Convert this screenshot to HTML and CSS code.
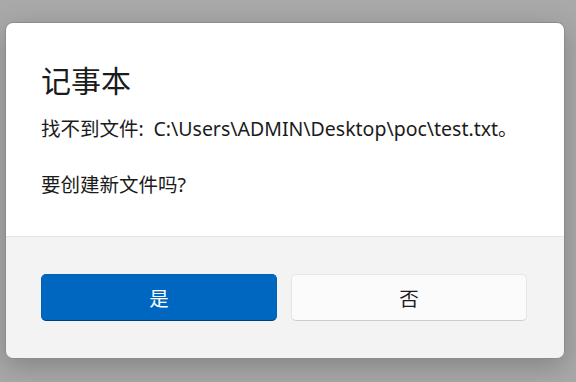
FILE: index.html
```html
<!DOCTYPE html>
<html lang="zh-CN">
<head>
    <meta charset="UTF-8">
    <title>记事本</title>
    <link rel="stylesheet" href="styles.css">
</head>
<body>
    <div class="dialog">
        <div class="dialog-content">
            <h1 class="dialog-title">记事本</h1>
            <p class="dialog-text">找不到文件:&ensp;C:\Users\ADMIN\Desktop\poc\test.txt。</p>
            <p class="dialog-text">要创建新文件吗?</p>
        </div>
        <div class="dialog-footer">
            <button class="btn btn-primary">是</button>
            <button class="btn btn-secondary">否</button>
        </div>
    </div>
</body>
</html>
```
FILE: styles.css
```css
html, body {
    margin: 0;
    height: 100%;
}
body {
    background: #a9a9a9;
    font-family: "Noto Sans", "Noto Sans CJK SC", sans-serif;
    color: #1b1b1b;
    overflow: hidden;
}
.dialog {
    box-sizing: border-box;
    width: 560px;
    height: 337px;
    margin: 22px 0 0 5px;
    border: 1px solid #8c8c8c;
    border-radius: 8px;
    overflow: hidden;
    display: flex;
    flex-direction: column;
    box-shadow: 0 8px 28px rgba(0, 0, 0, 0.22);
}
.dialog-content {
    flex: 1;
    background: #ffffff;
    padding: 40px 36px 0 35px;
}
.dialog-title {
    margin: 0 0 17px 0;
    font-size: 30px;
    font-weight: normal;
    line-height: 36px;
}
.dialog-text {
    margin: 0 0 30px 0;
    font-size: 19.5px;
    line-height: 26px;
}
.dialog-footer {
    background: #f3f3f3;
    border-top: 1px solid #e5e5e5;
    padding: 37px 36px 37px 35px;
    display: flex;
    gap: 14px;
}
.btn {
    width: 236px;
    height: 47px;
    border-radius: 5px;
    font-family: "Noto Sans CJK SC", sans-serif;
    font-size: 19.5px;
    padding: 0;
}
.btn-primary {
    background: #0067c0;
    color: #ffffff;
    border: 1px solid #0061b5;
    border-bottom-color: #003e73;
}
.btn-secondary {
    background: #fbfbfb;
    color: #1b1b1b;
    border: 1px solid #e5e5e5;
    border-bottom-color: #cccccc;
}
```
